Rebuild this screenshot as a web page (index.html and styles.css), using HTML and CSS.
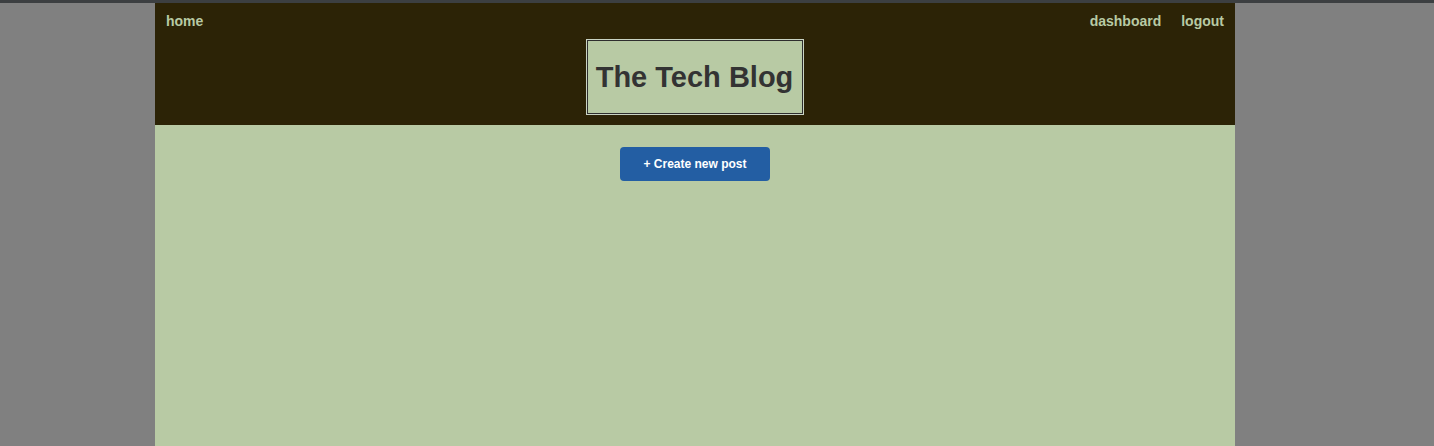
FILE: index.html
```html
<!DOCTYPE html>
<html>
<head>
<meta charset="utf-8">
<link rel="stylesheet" href="styles.css">
</head>
<body>
<div class="topline"></div>
<div class="page">
  <header class="header">
    <nav class="nav">
      <a href="#" class="nav-link">home</a>
      <div class="nav-right">
        <a href="#" class="nav-link">dashboard</a>
        <a href="#" class="nav-link">logout</a>
      </div>
    </nav>
    <div class="title-wrap">
      <h1 class="title">The Tech Blog</h1>
    </div>
  </header>
  <main class="main">
    <button class="create-btn">+ Create new post</button>
  </main>
</div>
</body>
</html>
```

FILE: styles.css
```css
html, body {
  margin: 0;
  padding: 0;
  height: 100%;
}
body {
  background: #808080;
  font-family: "Liberation Sans", Arial, sans-serif;
  display: flex;
  flex-direction: column;
}
.topline {
  height: 3px;
  background: #3c3f41;
  flex: none;
}
.page {
  width: 1080px;
  margin-left: 155px;
  flex: 1;
  display: flex;
  flex-direction: column;
  background: #b8caa4;
}
.header {
  background: #2c2306;
  height: 122px;
  box-sizing: border-box;
  padding: 9px 11px 0 11px;
}
.nav {
  display: flex;
  justify-content: space-between;
  align-items: center;
  height: 17px;
}
.nav-right {
  display: flex;
  gap: 20px;
}
.nav-link {
  color: #b8caa4;
  font-weight: bold;
  font-size: 14px;
  text-decoration: none;
}
.title-wrap {
  display: flex;
  justify-content: center;
  margin-top: 11px;
}
.title {
  margin: 0;
  background: #b8caa4;
  color: #333333;
  font-size: 29px;
  font-weight: bold;
  border: 1px solid #2e2e2e;
  outline: 1px solid #c9d3c3;
  width: 214px;
  height: 71px;
  box-sizing: content-box;
  display: flex;
  align-items: center;
  justify-content: center;
  padding-top: 1px;
  margin-right: 1px;
}
.main {
  flex: 1;
  display: flex;
  justify-content: center;
  align-items: flex-start;
  padding-top: 22px;
}
.create-btn {
  background: #235ea3;
  color: #ffffff;
  border: none;
  border-radius: 4px;
  width: 150px;
  height: 34px;
  font-family: "Liberation Sans", Arial, sans-serif;
  font-weight: bold;
  font-size: 12px;
}
```
